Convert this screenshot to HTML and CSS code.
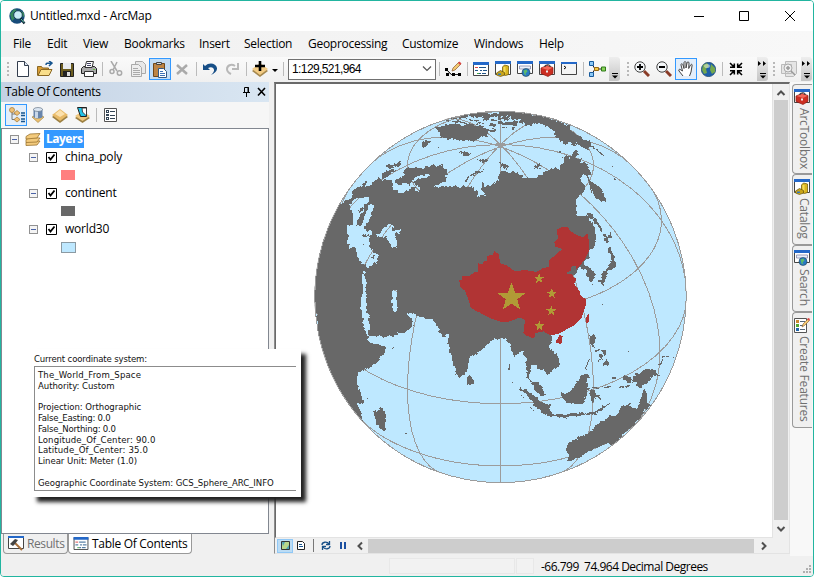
FILE: index.html
```html
<!DOCTYPE html>
<html lang="en">
<head>
<meta charset="utf-8">
<title>Untitled.mxd - ArcMap</title>
<link rel="stylesheet" href="styles.css">
</head>
<body>
<svg class="defs" width="0" height="0">
  <defs>
    <symbol id="i-toolbox" viewBox="0 0 16 16"><path fill="#fff" stroke="#444" d="M.5 1.500h15v12H.5z"/><path fill="#2468c8" d="M0 0h16v3H0z"/><path fill="#cc2e22" stroke="#8c1c14" stroke-width=".7" d="M2 7l6-2.500 6 2v6L9 15.500l-7-3z"/><path fill="#f2695a" d="M2.500 7L8 5l5.500 1.700L9 9z"/><path fill="none" stroke="#333" d="M6 6V4.500l3-.8 2 .8V6"/><path fill="#eee" d="M7 9.500h2v2H7z"/></symbol>
    <symbol id="i-catalog" viewBox="0 0 16 16"><path fill="#fff" stroke="#444" d="M.5 1.500h15v12H.5z"/><path fill="#2468c8" d="M0 0h16v3H0z"/><path fill="#d9b520" stroke="#77600c" stroke-width=".8" d="M7.500 6l2-2 4 1v8.500l-3 1-3-1z"/><path fill="#f5dc5a" d="M8.500 6h2v6h-2z"/><path fill="#c8a41a" stroke="#66530c" stroke-width=".7" d="M1.500 12l4-2.500 4 2V14l-4 1.500-4-1.500z"/><path fill="#357abd" d="M3 12.500h3V14H3z"/></symbol>
    <symbol id="i-search" viewBox="0 0 16 16"><path fill="#fff" stroke="#444" d="M.5 1.500h15v11H.5z"/><path fill="#2468c8" d="M0 0h16v3H0z"/><path fill="#eaf0fa" stroke="#88a" stroke-width=".8" d="M2.500 5h11v3h-11z"/><circle cx="9" cy="11.500" r="4" fill="#2879c4" stroke="#245" stroke-width=".6"/><path fill="#5dbb6a" d="M6.500 9.500l3-1 1 2-2 2 1 2-2-1z"/></symbol>
    <symbol id="i-toc" viewBox="0 0 16 14"><path fill="#fff" stroke="#444" d="M.5.5h15v13H.5z"/><path fill="#2468c8" d="M0 0h16v3H0z"/><path stroke="#d44" d="M2 5.500h3"/><path stroke="#258" d="M6 5.500h7M7 8.500h2M10 8.500h4M6 11.500h2M9 11.500h4M2 8.500h3"/><path stroke="#4a4" d="M4 11.500h2"/></symbol>
    <symbol id="i-diamond" viewBox="0 0 18 16"><path fill="#9c8043" d="M1 10l8-6 8 6-8 6z"/><path fill="#e8ba68" d="M1 8l8-6 8 6-8 6z"/><path fill="#fbe1ae" d="M4 7l5-4 5 4-5 3z"/></symbol>
    <symbol id="i-over" viewBox="0 0 11 23"><path fill="none" stroke="#000" d="M3 16.500h6"/><path d="M3 18.500h6L6 21.500z"/></symbol>
    <symbol id="i-chev" viewBox="0 0 11 23"><path d="M1 4l3 2.500L1 9zM6 4l3 2.500L6 9z"/><path stroke="#000" d="M3 16.500h6"/><path d="M3 18.500h6L6 21.500z"/></symbol>
    <symbol id="star" viewBox="-10 -10 20 20"><path fill="#b19a36" d="M0-10L2.300-3.200 9.500-3.100 3.800 1.200 5.900 8.100 0 4-5.900 8.100-3.800 1.200-9.500-3.100-2.300-3.200z"/></symbol>
    <symbol id="check" viewBox="0 0 11 11"><path fill="#fff" stroke="#000" stroke-width="1" d="M.5.5h10v10H.5z"/><path fill="none" stroke="#000" stroke-width="1.800" d="M2.500 5l2 2.500 4-5"/></symbol>
  </defs>
</svg>
<div class="window">
  <header class="titlebar">
    <svg class="logo" width="17" height="17" viewBox="0 0 17 17"><circle cx="8" cy="8" r="7.700" fill="#174b7a"/><path fill="#38885d" d="M1 6l4-5 3 1-3 3 1 5-3 3zM10 2l5 3v4l-3-2z"/><circle cx="9" cy="7" r="4.300" fill="#c9edf5" stroke="#174055"/><path stroke="#123" stroke-width="2.300" d="M11.500 10.500l4 5"/><path stroke="#5ad0b5" d="M12 11l3 3.500"/></svg>
    <span class="title">Untitled.mxd - ArcMap</span>
    <svg class="winbtns" width="110" height="14" viewBox="0 0 110 14"><g fill="none" stroke="#000"><path d="M0 7.500h10M45.500 2.500h9v9h-9zM91 2l10 10M101 2L91 12"/></g></svg>
  </header>
  <nav class="menu"><span>File</span><span>Edit</span><span>View</span><span>Bookmarks</span><span>Insert</span><span>Selection</span><span>Geoprocessing</span><span>Customize</span><span>Windows</span><span>Help</span></nav>
  <div class="toolbar">
    <i class="grip g1"></i>
    <b class="tb"><svg width="14" height="16" viewBox="0 0 14 16"><path fill="#fff" stroke="#333d4d" d="M1.500.5h7l4 4v11h-11z"/><path fill="#dbe5f2" stroke="#333d4d" d="M8.500.5v4h4"/></svg></b>
    <b class="tb"><svg width="17" height="16" viewBox="0 0 17 16"><path fill="#d99e36" stroke="#8a6723" d="M.5 14.500v-9h4l1 1.500h6v3"/><path fill="#f9de8b" stroke="#8a6723" d="M1 14.500l3-6h11l-3 6z"/><path fill="none" stroke="#17558f" stroke-width="1.500" d="M9 4c0-2 1-2 5-2m-2-2l3 2-3 3"/></svg></b>
    <b class="tb"><svg width="14" height="15" viewBox="0 0 14 15"><path fill="#6c5d20" stroke="#222" d="M.5 1.500h13v13H.5z"/><path fill="#e9ecf1" d="M3 1h8v6H3z"/><path fill="#222" d="M3 9h8v5H3z"/><path fill="#ddd" d="M7 10h3v4H7z"/></svg></b>
    <b class="tb"><svg width="16" height="16" viewBox="0 0 16 16"><path fill="#aaa" stroke="#222" d="M.5 7.500l2-2h11l2 2v5H.5z"/><path fill="#fff" stroke="#333" d="M4 6.500L5.500.5h7L11 6.500zM3.500 10.500h9v5h-9z"/><path stroke="#446" d="M6 2.500h4M6 4.500h4"/><path stroke="#6b4" d="M12 8.500h2"/></svg></b>
    <i class="sep w5"></i>
    <b class="tb"><svg width="16" height="16" viewBox="0 0 16 16"><g fill="none" stroke="#aaa" stroke-width="1.500"><path d="M3 0l6 10M9 1L5 9"/><circle cx="4" cy="10.500" r="2"/><circle cx="11.500" cy="12" r="2.200"/></g></svg></b>
    <b class="tb"><svg width="15" height="16" viewBox="0 0 15 16"><path fill="#e8e8e8" stroke="#aaa" d="M4.500.5h7l3 3v9h-10z"/><path fill="#eee" stroke="#aaa" d="M.5 3.500h7l3 3v9H.5z"/><path stroke="#aaa" d="M2 7.500h5M2 9.500h7M2 11.500h7M2 13.500h7"/></svg></b>
    <b class="tb on"><svg width="16" height="17" viewBox="0 0 16 17"><path fill="#bd8445" stroke="#704718" d="M1.500 2.500h11v13h-11z"/><path fill="#ddd" stroke="#444" d="M4.500 3.500v-2h5v2z"/><path fill="#fff" stroke="#335885" d="M6.500 7.500h5l3 3v6h-8z"/><path stroke="#3f72b5" d="M8 10.500h3M8 12.500h5M8 14.500h5"/></svg></b>
    <b class="tb"><svg width="12" height="11" viewBox="0 0 12 11"><path stroke="#aaa" stroke-width="2.500" d="M1 1l10 9M11 1L1 10"/></svg></b>
    <i class="sep w6"></i>
    <b class="tb"><svg width="14" height="12" viewBox="0 0 14 12"><path fill="#174f87" d="M0 1l2 2c4-4 11-3 12 2 .3 3-2 5-6 7 3-3 4-5 2-7-1-1-3-1-5 0l2 2H0z"/></svg></b>
    <b class="tb"><svg width="13" height="12" viewBox="0 0 13 12"><path fill="none" stroke="#b8b8b8" stroke-width="2" d="M9 3C5 0 1 3 1 6s2 4 4 5M12 0v6H6"/></svg></b>
    <i class="sep w6"></i>
    <b class="tb"><svg width="18" height="16" viewBox="0 0 18 16"><path fill="#a4874e" d="M1 10l8-6 8 6-8 6z"/><path fill="#f2cb84" d="M1 8l8-6 8 6-8 6z"/><path stroke="#000" stroke-width="2.600" d="M9 0v10M4 5h10"/></svg></b>
    <svg class="caret" width="8" height="5" viewBox="0 0 8 5"><path d="M1 1h6L4 4z"/></svg>
    <i class="sep w9"></i>
    <div class="combo"><span>1:129,521,964</span><svg width="10" height="6" viewBox="0 0 10 6"><path fill="none" stroke="#555" stroke-width="1.200" d="M1 .5l4 4 4-4"/></svg></div>
    <i class="sep w6"></i>
    <b class="tb"><svg width="17" height="16" viewBox="0 0 17 16"><path fill="none" stroke="#222" d="M2 9l4 4.500h9M1 8l5 5"/><path d="M0 7h3v3H0zM1 12h3v3H1zM7 12h3v3H7zM13 12h3v3h-3z"/><path fill="#f3ca72" stroke="#875a31" stroke-width=".7" d="M7 10l1-3 6-6 2 2-6 6z"/><path fill="#d44" d="M13 2l1.500-1.500 2 2L15 4z"/></svg></b>
    <i class="sep w6"></i>
    <b class="tb"><svg width="16" height="14"><use href="#i-toc"/></svg></b>
    <b class="tb"><svg width="16" height="16"><use href="#i-catalog"/></svg></b>
    <b class="tb"><svg width="16" height="16"><use href="#i-search"/></svg></b>
    <b class="tb"><svg width="16" height="16"><use href="#i-toolbox"/></svg></b>
    <b class="tb"><svg class="up" width="16" height="13" viewBox="0 0 16 13"><path fill="#f4f4f4" stroke="#444" d="M.5.5h15v12H.5z"/><path fill="#2468c8" d="M0 0h16v2H0z"/><path fill="none" stroke="#000" d="M3 4l2 1.500L3 7"/></svg></b>
    <i class="sep w6"></i>
    <b class="tb"><svg width="17" height="16" viewBox="0 0 17 16"><path fill="none" stroke="#222" d="M3 3l3 5-3 5M6 8h7"/><path fill="#8cc8f5" stroke="#175a9c" d="M.5.500h4v4h-4zM.5 11.500h4v4h-4z"/><path fill="#f5c842" stroke="#9a6a10" d="M5.500 6.500h4v3h-4z"/><path fill="#8ad35a" stroke="#2f7a18" d="M12.500 6h4v4h-4z"/></svg></b>
    <svg class="over o1" width="11" height="24"><use href="#i-over" height="23"/></svg>
    <i class="grip g2"></i>
    <b class="tb"><svg width="16" height="16" viewBox="0 0 16 16"><path stroke="#8a3b27" stroke-width="3" d="M10 10l5 5"/><circle cx="6" cy="6" r="5.200" fill="#f3f6f8" stroke="#444"/><path stroke="#000" stroke-width="1.800" d="M3 6h6M6 3v6"/></svg></b>
    <b class="tb"><svg width="16" height="16" viewBox="0 0 16 16"><path stroke="#8a3b27" stroke-width="3" d="M10 10l5 5"/><circle cx="6" cy="6" r="5.200" fill="#f3f6f8" stroke="#444"/><path stroke="#000" stroke-width="1.800" d="M3 6h6"/></svg></b>
    <b class="tb on light"><svg width="16" height="16" viewBox="0 0 16 16"><path fill="#fff" stroke="#444" d="M5 15L1 10c-1-2 1-2 2-1l1.500 1L3 4c0-2 1.500-1.500 2 0l1 3.500L6 2c0-2 2-2 2 0v5l1-5c0-1.500 2-1.500 2 0l-.3 5.500L12.500 4c1-1.500 2-.5 1.500 1l-1 6-1.500 4"/></svg></b>
    <b class="tb"><svg width="15" height="15" viewBox="0 0 15 15"><circle cx="7.500" cy="7.500" r="7.200" fill="#1f5fa8" stroke="#123b60" stroke-width=".6"/><path fill="#74a84d" d="M2 3l4-2 2 3-3 3 1 4-3 1-2-4zM10 2l4 4v4l-3 2-2-4z"/><ellipse cx="6" cy="4" rx="3" ry="2" fill="#fff" opacity=".45"/></svg></b>
    <i class="sep w6"></i>
    <b class="tb"><svg width="14" height="14" viewBox="0 0 14 14"><path fill="none" stroke="#000" stroke-width="1.600" d="M1 1l4 4M13 1L9 5M1 13l4-4M13 13L9 9M5.300 1.500v3.800H1M8.700 1.500v3.800H13M5.300 12.500V8.700H1M8.700 12.500V8.700H13"/></svg></b>
    <svg class="over o2" width="11" height="24"><use href="#i-chev" height="23"/></svg>
    <i class="grip g3"></i>
    <b class="tb"><svg width="16" height="16" viewBox="0 0 16 16"><path fill="#e5e5e5" stroke="#bbb" d="M4.500.5h11v12l-3 3h-8zM.5 3.500h10v9H.5z"/><circle cx="7" cy="7" r="4" fill="#eee" stroke="#aaa"/><path stroke="#999" stroke-width="1.500" d="M5 7h4M7 5v4M10 10l4 4"/></svg></b>
    <svg class="over o3" width="11" height="24"><use href="#i-chev" height="23"/></svg>
  </div>
  <main class="work">
    <section class="toc">
      <div class="toc-title"><span>Table Of Contents</span><svg width="24" height="10" viewBox="0 0 24 10"><path fill="none" stroke="#000" d="M2.500.500h4v5h-4zM1 5.500h7M4.500 5.500V10"/><path stroke="#000" d="M6 0v6"/><path stroke="#000" stroke-width="1.600" d="M16 1l7 7.500M23 1l-7 7.500"/></svg></div>
      <div class="toc-tools">
        <b class="tb on light"><svg width="17" height="16" viewBox="0 0 17 16"><path fill="none" stroke="#777" d="M4 5v7.500h4M4 7h5"/><g fill="#efc076" stroke="#a27532" stroke-width=".7"><circle cx="4" cy="3" r="2.500"/><path d="M6 6l3-2.500L12 6 9 8.500zM6 12.500L9 10l3 2.500L9 15z"/></g><path stroke="#17558f" stroke-width="1.500" d="M13 6h4M13 8.500h4M13 12h4M13 14.500h4"/></svg></b>
        <b class="tb"><svg width="14" height="16" viewBox="0 0 14 16"><path fill="#edc06d" stroke="#9a7a3a" stroke-width=".6" d="M1 10l6-3 6 3-6 5.500z"/><path fill="#6885ac" d="M2.500 2h9v8c-2 2-7 2-9 0z"/><path fill="#c9d8ea" d="M4 3h3v8H4z"/><ellipse cx="7" cy="2.500" rx="4.500" ry="2" fill="#dbe6f3" stroke="#567" stroke-width=".6"/></svg></b>
        <b class="tb"><svg width="18" height="16"><use href="#i-diamond"/></svg></b>
        <b class="tb"><svg width="17" height="16" viewBox="0 0 17 16"><path fill="#9c8043" d="M1 11l7.500-5 7.500 5-7.500 5z"/><path fill="#efc77d" d="M1 9l7.500-5L16 9l-7.500 5z"/><path fill="#22c4e8" stroke="#222" d="M3.500.500h9v9h-6z"/><path fill="#fff" stroke="#222" stroke-width=".8" d="M8 1h4.500v8l-4-4z"/></svg></b>
        <i class="sep w6"></i>
        <b class="tb"><svg width="13" height="14" viewBox="0 0 13 14"><path fill="#fff" stroke="#555" d="M.5.500h12v13H.5z"/><path fill="#345" d="M2 2h3v3H2zM2 6h3v2H2zM2 9h3v3H2z"/><path stroke="#345" d="M6 3.500h5M6 7.500h5M6 10.500h5"/><path fill="#fff" d="M3 3h1v1H3zM3 10h1v1H3z"/></svg></b>
      </div>
      <div class="tree">
        <div class="row root"><i class="minus"></i><svg width="16" height="13" viewBox="0 0 16 13"><g fill="#f3ca7c" stroke="#9a7430" stroke-width=".8"><path d="M1 9.500l3-2 11 .5-3 4-11 .500z"/><path d="M1 6.500l4-2 10 .5-3 4-11 .500z"/><path d="M1 3.500l4-2.500 10-.500-3 4.500-11 1z"/></g></svg><span class="sel">Layers</span></div>
        <div class="row"><i class="minus"></i><svg width="11" height="11"><use href="#check"/></svg><span>china_poly</span></div>
        <div class="row sw"><i class="swatch red"></i></div>
        <div class="row"><i class="minus"></i><svg width="11" height="11"><use href="#check"/></svg><span>continent</span></div>
        <div class="row sw"><i class="swatch grey"></i></div>
        <div class="row"><i class="minus"></i><svg width="11" height="11"><use href="#check"/></svg><span>world30</span></div>
        <div class="row sw"><i class="swatch blue"></i></div>
      </div>
      <div class="toc-tabs">
        <div class="tab"><svg width="16" height="15" viewBox="0 0 16 15"><path fill="#fff" stroke="#444" d="M.5.500h15v12H.5z"/><path fill="#2468c8" d="M0 0h16v2H0z"/><path stroke="#a8703c" stroke-width="2" d="M7 7l7 7"/><path fill="#444" d="M2 8l5-5 3 1-3 4-2 2z"/></svg><span>Results</span></div>
        <div class="tab active"><svg width="16" height="13"><use href="#i-toc"/></svg><span>Table Of Contents</span></div>
      </div>
    </section>
    <section class="view">
      <div class="canvas">
        <svg class="globe" width="376" height="376" viewBox="312 109 376 376" shape-rendering="crispEdges">
          <defs>
            <clipPath id="disc"><circle cx="500.500" cy="297" r="186"/></clipPath>
            <filter id="coast" filterUnits="userSpaceOnUse" x="300" y="100" width="400" height="400" color-interpolation-filters="sRGB"><feTurbulence type="fractalNoise" baseFrequency=".28" numOctaves="2" seed="4"/><feDisplacementMap in="SourceGraphic" scale="4" xChannelSelector="R" yChannelSelector="G"/></filter>
          </defs>
          <circle cx="500.500" cy="297" r="186" fill="#bee8ff"/>
          <g fill="none" stroke="#9c9c9c" clip-path="url(#disc)">
            <path d="M500.500 111v372"/>
            <path d="M442 120.400A186 76.200 71.700 0 1 559 473.600"/>
            <path d="M559 120.400A186 76.200 -71.700 0 0 442 473.600"/>
            <path d="M369.400 165.100A186 132 45.200 0 1 631.600 428.900"/>
            <path d="M631.600 165.100A186 132 -45.200 0 0 369.400 428.900"/>
            <path d="M314.500 297A186 152.400 0 0 1 686.500 297"/>
            <ellipse cx="500.500" cy="165.100" rx="93" ry="53.300"/>
            <path d="M353 183.500A161 92.400 0 1 0 648 183.500"/>
            <path d="M314.500 297A186 106.700 0 0 0 686.500 297"/>
            <path d="M353 410.500A161 92.400 0 0 0 648 410.500"/>
            <path d="M496 144.500h9" stroke-width="3"/>
          </g>
          <g clip-path="url(#disc)"><g fill="#686868" filter="url(#coast)">
            <g transform="translate(310 100) scale(.33333)">
              <path fill-rule="evenodd" d="M0 313L95 312 103 303 118 298 125 290 124 280 132 268 150 258 165 245 170 247 168 262 178 258 190 243 205 235 212 241 225 240 245 242 250 255 250 268 262 270 265 278 280 280 286 272 300 274 302 265 315 262 318 272 327 272 325 258 311 248 315 240 340 234 360 228 357 222 335 225 318 230 308 238 300 255 290 250 283 246 270 255 258 252 253 245 260 235 272 235 285 225 278 215 288 205 320 203 343 205 345 197 360 201 368 195 380 200 395 196 402 206 411 208 408 246 392 248 388 255 375 253 374 263 388 260 400 256 410 261 430 256 450 262 462 255 465 262 490 262 493 272 505 273 500 292 509 290 512 285 528 287 522 277 514 274 515 255 520 243 525 262 530 256 543 257 548 248 560 254 558 242 570 233 585 227 600 220 640 225V640H0ZM118 318L125 305 135 298 150 293 165 295 178 292 175 305 165 318 158 340 150 348 140 366 140 376 148 378 158 371 162 352 172 330 180 312 192 314 185 335 183 345 178 365 165 372 162 382 169 400 180 390 190 395 190 405 180 406 172 420 175 428 180 442 185 450 190 445 188 457 208 465 200 476 205 484 192 490 175 507 167 496 158 489 148 482 138 450 130 442 118 448 113 420 112 380 128 375 130 350 125 330ZM195 408L210 400 225 380 240 370 248 378 245 390 258 388 275 390 268 402 255 398 262 430 262 445 248 445 240 432 228 412 210 410ZM160 513L164 513 164 525 168 545 168 580 170 640H155L153 600 160 560ZM245 572L255 568 262 575V640H247Z"/>
              <path d="M375 82L390 80 410 71 430 72 455 75 480 71 500 78 520 78 535 90 530 108 510 112 495 125 470 120 445 120 425 116 395 115 390 100ZM335 130L350 121 360 124 345 142 335 140ZM228 196L240 190 248 196 278 182 272 195 250 202 245 208 228 202ZM215 220L240 210 262 210 245 217 232 232 215 234ZM261 238L275 236 278 245 262 252 254 245ZM450 157L475 156 484 161 468 170 455 164ZM503 177L533 181 530 187 512 184ZM462 240L475 228 500 215 521 211 521 216 500 220 480 228 470 246 462 243ZM140 335L165 318 158 330 145 340ZM154 405L165 402 178 408 158 412ZM160 515L170 520 165 535ZM155 430L158 430 161 442 167 443 158 440ZM181 467L194 466 192 473 184 472ZM572 188L590 195 588 208 574 200Z"/>
              <path d="M385 57L420 54 440 55 470 42 510 38 540 42 600 33V49L580 47 560 52 545 50 530 60 515 58 520 50 500 53 480 49 450 57ZM410 61l60 5v5l-30-2zM475 57l30 3-3 5-25-2zM500 68h24v5h-24zM543 58h14v4h-14zM540 70h18v9h-18zM565 62h10v10h-10zM572 80h18v4h-18zM535 92l20-4 3 6-15 2zM562 52h20v5h-20zM590 55h10v3h-10zM588 69h12v5h-12zM545 84h13v3h-13zM388 140h4v3h-4z"/>
            </g>
            <g transform="translate(500 100) scale(.33333)">
              <path d="M-60 420L-6 300 -6 229 5 213 15 212 30 222 38 214 52 215 55 224 44 228 42 243 60 236 85 232 110 235 116 225 130 226 130 214 150 210 160 204 176 206 185 198 193 184 190 172 200 166 208 174 218 160 235 158 235 166 222 174 245 178 238 186 255 187 265 200 272 214 270 223 262 228 272 244 285 252 295 258 306 267 313 285 322 308 300 300 285 292 277 276 270 262 266 244 255 222 245 226 243 245 256 256 256 268 242 285 228 295 228 345 245 348 265 345 272 365 285 385 288 415 284 445 268 450 268 470 248 490 250 495 262 498 280 517 287 523 284 532 275 545 268 542 265 530 259 523 260 512 240 500 180 590 -60 600Z"/>
              <path d="M0 31L60 36 130 50 180 65 207 76 212 92 240 110 252 120 263 120 272 132 265 150 245 143 232 130 222 140 208 122 200 136 180 125 165 110 160 90 140 78 115 68 90 75 77 75 60 58 0 45ZM270 132L290 146 312 165 310 168 285 147 268 137ZM262 338L271 338 285 355 294 367 308 390 304 392 288 372 280 360 262 347ZM310 402L320 408 335 398 332 413 323 420 322 432 312 418 318 413 309 407ZM326 440L336 445 335 455 344 465 343 483 350 488 345 503 330 507 320 518 311 519 306 512 315 512 324 500 333 487 333 467 325 455ZM304 520L327 518 313 534 312 558 296 545 297 538 308 540ZM210 160L235 152 230 160ZM100 200l18-10 8 6-14 5 18 10-15-3zM0 185l12 9 15 3-2 7-22-8zM10 50l20 4-4 8-20-2zM35 45l18 7-6 10-15-5zM5 65l15 3-8 7-10-2zM25 70l15-7 15 5-8 9-22-2zM60 60l15 6-8 6-10-3zM12 82h8v3h-8zM35 82h10v4h-10zM336 201h3v3h-3zM343 234h6v5h-6zM327 329h3v3h-3zM321 176h3v3h-3zM334 380h3v4h-3zM276 552h3v4h-3zM178 154h5v4h-5z"/>
            </g>
            <g transform="translate(310 290) scale(.33333)">
              <path d="M18 -30H155L153 60 160 100 172 135 175 156 200 163 228 170 225 185 212 203 203 218 185 230 165 238 148 247 140 258 142 285 150 300 160 340 142 343 155 372 160 410 0 410 0 320 40 200 25 150 20 80Z"/>
              <path d="M168 -30H247V55L258 67 278 68 290 58 292 75 308 90 310 102 302 115 280 130 265 130 258 135 230 140 175 138 177 70 170 50ZM262 -30V20L268 35 278 48 293 50 302 65 318 75 340 85 370 88 378 105 390 118 385 125 400 140 414 132 412 160 420 185 427 210 436 245 445 262 458 260 467 245 472 245 478 200 500 192 530 165 545 150 560 148 572 145 600 148 660 160V-30ZM474 250L484 262 492 272 488 284 472 284 471 270ZM190 363L200 366 212 352 222 358 228 378 225 422 212 418 198 402 195 385ZM246 171h6v3h-6zM170 323h4v3h-4zM273 429h3v3h-3zM288 429h3v3h-3z"/>
            </g>
            <g transform="translate(500 290) scale(.33333)">
              <path d="M-50 60L0 135 20 140 22 150 35 175 42 200 52 198 60 185 68 183 70 192 76 198 80 225 83 245 78 262 90 270 98 277 115 278 126 290 130 310 137 318 125 318 105 302 100 285 90 270 86 260 92 245 90 230 98 225 110 228 115 238 130 240 142 256 150 245 162 236 178 229 180 205 170 190 145 175 147 162 157 160 155 130 100 60ZM50 290L72 297 100 315 122 335 150 347 153 378 130 370 105 350 92 328 72 308ZM152 372L175 376 190 371 230 370 225 375 195 383 153 379ZM182 308L200 312 225 285 248 252 265 255 268 262 258 275 268 300 258 305 256 330 248 342 205 340 188 325ZM272 297L282 302 290 315 301 315 303 330 290 320 283 323 282 338 272 337 272 318 268 310ZM278 292l15 5 10-5 18-5-18 3zM400 260L408 252 425 245 435 238 468 237 470 248 478 262 460 256 448 270 440 283 428 283 425 293 412 288 410 276 395 278 400 267ZM369 260L388 258 396 270 388 277 372 270ZM202 463L240 440 265 432 290 405 330 378 350 378 360 350 385 345 398 332 387 350 412 355 428 310 434 296 440 310 440 335 450 345 400 405 345 460 332 465 328 457 280 478 245 500 215 512 198 515 210 500 202 488ZM270 135L287 137 286 155 278 166 287 178 295 175 302 172 298 180 280 173 270 160ZM283 180h10v6h-10zM300 178L316 182 318 200 310 195 308 185ZM298 195l10 4-3 10-5-2-5 10-3-5 7-8zM308 222L315 215 322 205 329 218 324 232 318 225 310 229ZM165 374L225 372 285 365 305 350 330 338 310 355 285 373 225 378 165 379ZM252 242l15-35 3-1-13 32zM340 260h7v7h-7zM355 290l30-5 5 5-30 4zM330 305l20-10-18 8zM310 292l20-5-3 7zM487 199h8v3h-8zM502 199h5v4h-5zM515 200h8v3h-8zM475 227l14-20-5 18zM23 225h6v14h-4zM35 279h3v3h-3zM387 182h3v3h-3zM514 81h3v3h-3zM306 39h3v3h-3zM85 345l18 13-2 4zM60 314h6v3h-6zM68 323h5v3h-5z"/>
            </g>
          </g></g>
          <circle cx="500.500" cy="297" r="185.700" fill="none" stroke="#9c9c9c"/>
          <g transform="translate(500 100) scale(.33333)" fill="#b13434">
            <path d="M-123 540L-112 538 -115 528 -92 528 -75 515 -67 516 -67 490 -52 492 -48 483 -38 485 -40 468 -22 464 -16 453 -3 464 0 490 18 495 28 502 45 514 75 510 110 516 128 505 148 500 148 480 170 462 187 447 165 440 163 425 173 418 172 388 190 380 205 383 212 394 225 402 250 413 262 400 268 430 268 452 254 480 230 507 226 498 214 500 214 511 200 518 202 523 216 522 222 534 229 536 223 552 238 572 242 587 257 598 258 615 244 655 225 675 202 687 180 700 152 706 130 694 105 700 103 715 92 712 80 707 70 700 75 660 60 652 40 660 18 667 0 665 -30 655 -60 638 -72 634 -90 620 -92 605 -100 585 -105 572 -118 562ZM168 720L172 717 178 705 188 708 184 731 170 730ZM258 655L261 645 267 641 266 665 261 670 257 664Z"/>
          </g>
          <use href="#star" x="496.500" y="282" width="30" height="31"/>
          <use href="#star" x="533.800" y="273" width="11" height="11"/>
          <use href="#star" x="546.200" y="288" width="11" height="11"/>
          <use href="#star" x="545.700" y="305.500" width="11" height="11"/>
          <use href="#star" x="534" y="320.500" width="11" height="11"/>
        </svg>
      </div>
      <div class="vscroll"><svg width="14" height="15" viewBox="0 0 14 15"><path fill="none" stroke="#505050" stroke-width="2" d="M3.500 10L7 6.500l3.500 3.500"/></svg><i></i><svg width="14" height="18" viewBox="0 0 14 18"><path fill="none" stroke="#505050" stroke-width="2" d="M3.500 7L7 10.500 10.500 7"/></svg></div>
      <div class="hbar">
        <b class="vb on"><svg width="9" height="9" viewBox="0 0 9 9"><path fill="#b9d68a" stroke="#333" d="M.5.500h8v8h-8z"/><path fill="#4c9fb5" d="M1 1h3L2 5zM5 8l3-4v4z"/></svg></b>
        <b class="vb"><svg width="8" height="9" viewBox="0 0 8 9"><path fill="#fff" stroke="#222" d="M.5.500h5l2 2v6h-7z"/><path stroke="#17558f" d="M2 3.500h3M2 5.500h4"/></svg></b>
        <i class="vsep"></i>
        <b class="vb refresh"><svg width="10" height="9" viewBox="0 0 10 9"><path fill="none" stroke="#174f87" stroke-width="1.300" d="M1 4c0-3 5-4 7-1M9 5c0 3-5 4-7 1M8.500 0v3.500H5M1.500 9V5.500H5"/></svg></b>
        <b class="vb pause"><svg width="6" height="7" viewBox="0 0 6 7"><path fill="#1b4fa0" d="M0 0h2v7H0zM4 0h2v7H4z"/></svg></b>
        <svg class="la" width="10" height="14" viewBox="0 0 10 14"><path fill="none" stroke="#505050" stroke-width="2" d="M7 3.500L3.500 7 7 10.500"/></svg>
        <i class="hthumb"></i>
        <svg class="ra" width="19" height="14" viewBox="0 0 19 14"><path fill="none" stroke="#505050" stroke-width="2" d="M8 3.500L11.500 7 8 10.500"/></svg>
      </div>
    </section>
    <aside class="dock">
      <div class="side s1"><svg width="16" height="16"><use href="#i-toolbox"/></svg><span>ArcToolbox</span></div>
      <div class="side s2"><svg width="16" height="16"><use href="#i-catalog"/></svg><span>Catalog</span></div>
      <div class="side s3"><svg width="16" height="16"><use href="#i-search"/></svg><span>Search</span></div>
      <div class="side s4"><svg width="16" height="16" viewBox="0 0 16 16"><path fill="#fff" stroke="#555" d="M.5 1.500h12v14H.5z"/><path fill="#c83" d="M2 3h3v3H2z"/><path fill="#5a3" d="M2 7h3v3H2z"/><path fill="#26a" d="M2 11h3v3H2z"/><path stroke="#567" d="M6 4.500h5M6 8.500h3M6 12.500h5"/><path fill="#f3ca72" stroke="#875a31" stroke-width=".6" d="M8 10l1-3 5-5 1.500 1.500-5 5z"/><path fill="#d44" d="M13 2l1.500-1 1.500 1-1 2z"/></svg><span>Create Features</span></div>
    </aside>
  </main>
  <footer class="status"><i class="c1"></i><i class="c2"></i><span>-66.799&nbsp; 74.964 Decimal Degrees</span><svg width="8" height="8" viewBox="0 0 8 8"><path fill="#b0b0b0" d="M6 0h2v2H6zM3 3h2v2H3zM6 3h2v2H6zM0 6h2v2H0zM3 6h2v2H3zM6 6h2v2H6z"/></svg></footer>
  <div class="coords">
    <p class="cap">Current coordinate system:</p>
    <div class="cbox"><p class="wide">The_World_From_Space</p><p>Authority: Custom</p><p>&nbsp;</p><p>Projection: Orthographic</p><p class="tight">False_Easting: 0.0</p><p class="tight">False_Northing: 0.0</p><p class="wide">Longitude_Of_Center: 90.0</p><p class="wide">Latitude_Of_Center: 35.0</p><p>Linear Unit: Meter (1.0)</p><p>&nbsp;</p><p>Geographic Coordinate System: GCS_Sphere_ARC_INFO</p></div>
  </div>
</div>
</body>
</html>
```
FILE: styles.css
```css
* { box-sizing: border-box; margin: 0; padding: 0; }
body { width: 814px; height: 577px; overflow: hidden; background: #fff; color: #000; font: 12px/16px "Open Sans", "Noto Sans", sans-serif; letter-spacing: -0.28px; }
svg { display: block; flex: none; }
.defs { position: absolute; }
.window { position: relative; width: 814px; height: 577px; border: 1px solid #22b5a0; border-radius: 4px; display: grid; grid-template-rows: 30px 26px 25px 474px 20px; background: #f0f0f0; overflow: hidden; }
.titlebar { display: flex; align-items: center; background: #fff; padding: 0 9px 0 8px; }
.title { margin-left: 4px; letter-spacing: -0.2px; }
.winbtns { margin-left: auto; width: 110px; }
.menu { display: grid; grid-template-columns: 34px 36px 41px 75px 45px 64px 94px 72px 65px 60px; padding-left: 12px; background: linear-gradient(90deg, #f0f0f0, #f8f8f8); align-items: center; white-space: nowrap; }
.toolbar { display: flex; align-items: center; background: linear-gradient(#fafafa, #f0f0f0); height: 25px; padding-bottom: 1px; }
.tb { width: 22px; height: 22px; flex: none; display: flex; align-items: center; justify-content: center; }
.tb.on { border: 1px solid #3399ff; background: #c2dcf5; }
.tb.on.light { background: #e3eefa; }
.sep { flex: none; height: 14px; background: linear-gradient(#bbb, #bbb) center / 1px 100% no-repeat; }
.w5 { width: 5px; } .w6 { width: 6px; } .w9 { width: 9px; }
.grip { flex: none; width: 2px; height: 15px; background: repeating-linear-gradient(#b8b8b8 0 2px, transparent 2px 4px); }
.g1 { margin: 0 3px 0 6px; }
.g2 { margin: 0 2px 0 7px; }
.g3 { margin: 0 3px 0 5px; }
.caret { margin-top: 2px; }
.up { margin-bottom: 2px; }
.over { background: linear-gradient(#eee, #c4c4c4); border-radius: 0 3px 3px 0; }
.o1 { margin-left: 1px; }
.o2 { margin-left: 10px; }
.o3 { margin-left: 1px; }
.combo { width: 148px; height: 21px; flex: none; border: 1px solid #707070; background: #fff; display: flex; align-items: center; justify-content: space-between; padding: 0 3px; font: 12px/16px "Liberation Sans", sans-serif; letter-spacing: -0.6px; }
.work { display: grid; grid-template-columns: 273px 516px 23px; }
.toc { display: grid; grid-template-rows: 20px 26px 406px 22px; width: 268px; height: 474px; }
.toc-title { display: flex; align-items: center; justify-content: space-between; padding: 0 3px 0 4px; background: linear-gradient(90deg, #c4d2e4, #d9e6f2); }
.toc-tools { display: flex; align-items: center; padding-left: 4px; background: #f6f6f6; }
.tree { border: 1px solid #828790; background: #fff; padding-top: 1px; }
.row { display: flex; align-items: center; height: 18px; padding-left: 27px; }
.row.root { padding-left: 8px; }
.row > span { margin-left: 8px; letter-spacing: -0.2px; }
.minus { width: 9px; height: 9px; flex: none; border: 1px solid #919191; background: linear-gradient(#4b63a7, #4b63a7) center / 5px 1px no-repeat #f4f4f4; margin-right: 8px; }
.row.root .minus { margin-right: 6px; }
.row > .sel { margin-left: 3px; background: #3399ff; color: #fff; font-weight: bold; padding: 1px 2px; letter-spacing: -0.5px; }
.row.sw { padding-left: 59px; }
.swatch { width: 14px; height: 10px; }
.red { background: #ff7f7f; } .grey { background: #686868; }
.blue { width: 15px; height: 11px; background: #bee8ff; border: 1px solid #8b9aa3; }
.toc-tabs { display: flex; padding-left: 2px; height: 20px; }
.tab { height: 20px; width: 65px; border: 1px solid #999; border-top: 0; border-radius: 0 0 4px 4px; display: flex; align-items: center; gap: 3px; padding-left: 4px; color: #707070; white-space: nowrap; letter-spacing: -0.4px; }
.tab.active { width: 124px; background: #fff; color: #000; letter-spacing: -0.3px; }
.view { display: grid; grid-template-columns: 498px 18px; grid-template-rows: 454px 15px; width: 516px; height: 472px; border: 1px solid #8c8c8c; border-top: 2px solid #696969; border-right-color: #e3e3e3; border-bottom-color: #e3e3e3; }
.canvas { background: #fff; border-left: 1px solid #696969; border-right: 1px solid #e3e3e3; border-bottom: 1px solid #e3e3e3; padding: 25px 0 0 36px; overflow: hidden; }
.vscroll { padding: 1px 0 0 1px; display: flex; flex-direction: column; width: 15px; }
.vscroll i { height: 420px; background: #cdcdcd; }
.hbar { display: flex; align-items: center; }
.vb { width: 16px; height: 14px; display: flex; align-items: center; justify-content: center; flex: none; }
.vb.on { background: #bcdcf4; border: 1px solid #90c8f6; margin-left: 2px; }
.vsep { width: 1px; height: 13px; background: #777; margin: 0 4px; }
.pause { margin-left: 1px; }
.la { margin-left: 4px; }
.hthumb { width: 386px; height: 14px; flex: none; background: #cdcdcd; margin-left: 3px; }
.dock { background: #f8f8f8; padding: 2px 0 0 2px; }
.side { width: 20px; border: 1px solid #999; border-right: 0; border-radius: 4px 0 0 4px; background: #f0f0f0; padding: 4px 0 0 1px; color: #707070; display: flex; flex-direction: column; letter-spacing: -0.2px; }
.side span { writing-mode: vertical-rl; line-height: 16px; margin-top: 3px; white-space: nowrap; }
.s1 { height: 90px; } .s2 { height: 71px; } .s3 { height: 67px; } .s4 { height: 116px; }
.status { display: flex; align-items: center; background: #f0f0f0; padding-right: 2px; }
.status i { height: 16px; border: 1px solid #e8e8e8; background: #f2f2f2; }
.c1 { width: 126px; margin-left: 388px; }
.c2 { width: 18px; margin: 0 7px 0 1px; }
.status span { white-space: nowrap; letter-spacing: -0.5px; padding-top: 1px; }
.status svg { margin: 6px 0 0 auto; }
.coords { position: absolute; left: 31px; top: 348px; width: 269px; height: 148px; background: #fff; box-shadow: 5px 5px 4px #222; padding: 2px 5px 0 2px; font: 9.500px/10.750px "DejaVu Sans Condensed", "DejaVu Sans", sans-serif; letter-spacing: -0.15px; color: #111; white-space: nowrap; }
.cap { height: 15px; line-height: 15px; }
.cbox { height: 125px; border: 1px solid #8c8c8c; border-right: 0; padding: 3px 0 0 3px; letter-spacing: -0.04px; }
.wide { letter-spacing: 0.14px; }
.tight { letter-spacing: -0.22px; }
```
